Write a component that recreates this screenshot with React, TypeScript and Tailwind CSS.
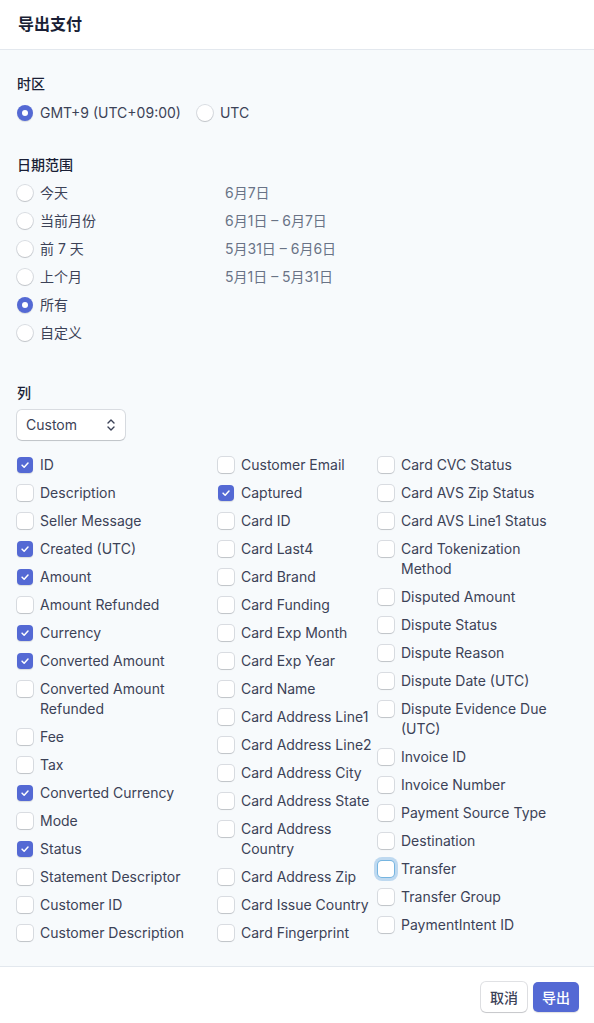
import React from "react";

interface ColumnOption {
  label: string;
  checked?: boolean;
  focused?: boolean;
}

const col1: ColumnOption[] = [
  { label: "ID", checked: true },
  { label: "Description" },
  { label: "Seller Message" },
  { label: "Created (UTC)", checked: true },
  { label: "Amount", checked: true },
  { label: "Amount Refunded" },
  { label: "Currency", checked: true },
  { label: "Converted Amount", checked: true },
  { label: "Converted Amount\nRefunded" },
  { label: "Fee" },
  { label: "Tax" },
  { label: "Converted Currency", checked: true },
  { label: "Mode" },
  { label: "Status", checked: true },
  { label: "Statement Descriptor" },
  { label: "Customer ID" },
  { label: "Customer Description" }
];

const col2: ColumnOption[] = [
  { label: "Customer Email" },
  { label: "Captured", checked: true },
  { label: "Card ID" },
  { label: "Card Last4" },
  { label: "Card Brand" },
  { label: "Card Funding" },
  { label: "Card Exp Month" },
  { label: "Card Exp Year" },
  { label: "Card Name" },
  { label: "Card Address Line1" },
  { label: "Card Address Line2" },
  { label: "Card Address City" },
  { label: "Card Address State" },
  { label: "Card Address\nCountry" },
  { label: "Card Address Zip" },
  { label: "Card Issue Country" },
  { label: "Card Fingerprint" }
];

const col3: ColumnOption[] = [
  { label: "Card CVC Status" },
  { label: "Card AVS Zip Status" },
  { label: "Card AVS Line1 Status" },
  { label: "Card Tokenization\nMethod" },
  { label: "Disputed Amount" },
  { label: "Dispute Status" },
  { label: "Dispute Reason" },
  { label: "Dispute Date (UTC)" },
  { label: "Dispute Evidence Due\n(UTC)" },
  { label: "Invoice ID" },
  { label: "Invoice Number" },
  { label: "Payment Source Type" },
  { label: "Destination" },
  { label: "Transfer", focused: true },
  { label: "Transfer Group" },
  { label: "PaymentIntent ID" }
];

const dateRanges = [
  { label: "今天", value: "6月7日" },
  { label: "当前月份", value: "6月1日 – 6月7日" },
  { label: "前 7 天", value: "5月31日 – 6月6日" },
  { label: "上个月", value: "5月1日 – 5月31日" },
  { label: "所有", value: "", checked: true },
  { label: "自定义", value: "" }
];

const Radio = ({ checked }: { checked?: boolean }) =>
  checked ? (
    <span className="flex h-4 w-4 shrink-0 items-center justify-center rounded-full bg-[#5469d4] shadow-[0_1px_1px_rgba(0,0,0,0.12)]">
      <span className="h-1.5 w-1.5 rounded-full bg-white" />
    </span>
  ) : (
    <span className="h-4 w-4 shrink-0 rounded-full bg-white shadow-[0_0_0_1px_rgba(60,66,87,0.16),0_1px_1px_rgba(0,0,0,0.12)]" />
  );

const Checkbox = ({ checked, focused }: { checked?: boolean; focused?: boolean }) => {
  if (checked) {
    return (
      <span className="mt-[2px] flex h-4 w-4 shrink-0 items-center justify-center rounded-[4px] bg-[#5469d4] shadow-[0_1px_1px_rgba(0,0,0,0.12)]">
        <svg width="10" height="10" viewBox="0 0 12 12" fill="none">
          <path d="M2.5 6.2L5 8.6L9.6 3.6" stroke="white" strokeWidth="1.8" strokeLinecap="round" strokeLinejoin="round" />
        </svg>
      </span>
    );
  }
  if (focused) {
    return (
      <span className="mt-[2px] h-4 w-4 shrink-0 rounded-[4px] bg-white shadow-[0_0_0_1px_rgba(58,151,212,0.55),0_0_0_4px_rgba(143,190,230,0.55)]" />
    );
  }
  return (
    <span className="mt-[2px] h-4 w-4 shrink-0 rounded-[4px] bg-white shadow-[0_0_0_1px_rgba(60,66,87,0.16),0_1px_1px_rgba(0,0,0,0.12)]" />
  );
};

const OptionColumn = ({ items }: { items: ColumnOption[] }) => (
  <div className="flex flex-col gap-2">
    {items.map((item) => (
      <label key={item.label} className="flex items-start gap-[7px]">
        <Checkbox checked={item.checked} focused={item.focused} />
        <span className="whitespace-pre-line text-[14px] leading-5 text-[#3c4257]">{item.label}</span>
      </label>
    ))}
  </div>
);

export default function App() {
  return (
    <div
      className="flex min-h-[1023px] w-full flex-col bg-white"
      style={{ fontFamily: 'Inter, "Noto Sans CJK SC", sans-serif' }}
    >
      <div className="flex h-[50px] items-center border-b border-[#e3e8ee] px-[18px] pb-[2px]">
        <h1 className="text-[16px] font-semibold text-[#1a1f36]">导出支付</h1>
      </div>

      <div className="flex flex-col bg-[#f7fafc] px-[17px] pt-[24px] pb-[23px]">
        <span className="text-[14px] leading-5 font-medium text-[#1a1f36]">时区</span>
        <div className="mt-[9px] flex items-center">
          <label className="flex items-center gap-[7px]">
            <Radio checked />
            <span className="text-[14px] leading-5 text-[#3c4257]">GMT+9 (UTC+09:00)</span>
          </label>
          <label className="ml-4 flex items-center gap-[7px]">
            <Radio />
            <span className="text-[14px] leading-5 text-[#3c4257]">UTC</span>
          </label>
        </div>

        <span className="mt-8 text-[14px] leading-5 font-medium text-[#1a1f36]">日期范围</span>
        <div className="mt-2 flex flex-col gap-2">
          {dateRanges.map((range) => (
            <div key={range.label} className="flex items-center">
              <label className="flex w-[208px] items-center gap-[7px]">
                <Radio checked={range.checked} />
                <span className="text-[14px] leading-5 text-[#3c4257]">{range.label}</span>
              </label>
              <span className="text-[14px] leading-5 text-[#697386]">{range.value}</span>
            </div>
          ))}
        </div>

        <span className="mt-10 text-[14px] leading-5 font-medium text-[#1a1f36]">列</span>
        <div className="mt-[7px] flex h-[30px] w-[108px] items-center justify-between rounded-[5px] bg-white pr-[9px] pl-[9px] shadow-[0_0_0_1px_rgba(60,66,87,0.16),0_1px_1px_rgba(0,0,0,0.12)]">
          <span className="text-[14px] leading-5 text-[#3c4257]">Custom</span>
          <svg width="10" height="14" viewBox="0 0 10 14" fill="none">
            <path d="M2 5L5 2L8 5" stroke="#3c4257" strokeWidth="1.4" strokeLinecap="round" strokeLinejoin="round" />
            <path d="M2 9L5 12L8 9" stroke="#3c4257" strokeWidth="1.4" strokeLinecap="round" strokeLinejoin="round" />
          </svg>
        </div>

        <div className="mt-[15px] grid grid-cols-[201px_160px_1fr]">
          <OptionColumn items={col1} />
          <OptionColumn items={col2} />
          <OptionColumn items={col3} />
        </div>
      </div>

      <div className="flex flex-1 items-start justify-end gap-[6px] border-t border-[#e3e8ee] bg-white px-[15px] pt-[15px]">
        <button className="h-[30px] w-[46px] rounded-[5px] bg-white text-[14px] font-medium text-[#3c4257] shadow-[0_0_0_1px_rgba(60,66,87,0.16),0_1px_1px_rgba(0,0,0,0.12)]">
          取消
        </button>
        <button className="h-[30px] w-[46px] rounded-[5px] bg-[#5469d4] text-[14px] font-medium text-white shadow-[0_1px_1px_rgba(0,0,0,0.12)]">
          导出
        </button>
      </div>
    </div>
  );
}
